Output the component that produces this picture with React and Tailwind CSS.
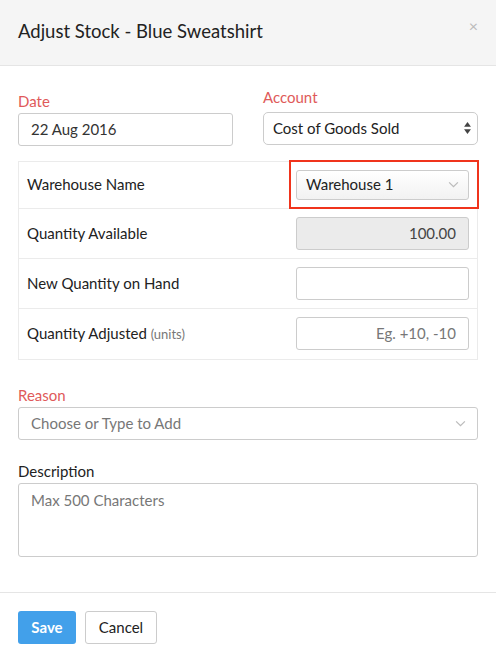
import React from "react";

const Chevron = ({ className }) => (
  <svg viewBox="0 0 12 8" className={className} fill="none" stroke="currentColor" strokeWidth="1.4">
    <path d="M1 1.5l5 5 5-5" />
  </svg>
);

const Row = ({ label, children, last }) => (
  <div className={`flex items-center ${last ? "" : "border-b border-[#ebebeb]"} h-[50px]`}>
    <div className="flex-1 pl-[8px] text-[15px] text-[#222]">{label}</div>
    <div className="w-[189px] px-2 relative">{children}</div>
  </div>
);

export default function App() {
  return (
    <div className="w-[496px] h-[662px] bg-white flex flex-col text-[#333]" style={{ fontFamily: "Lato, 'Open Sans', sans-serif" }}>
      {/* Header */}
      <div className="h-[66px] bg-[#f5f5f5] border-b border-[#e5e5e5] flex items-center justify-between pl-[18px] pr-[18px] shrink-0">
        <h1 className="text-[18.5px] text-[#222] mt-[-2px]">Adjust Stock - Blue Sweatshirt</h1>
        <span className="text-[#bbb] text-[16px] self-start mt-[14px]">×</span>
      </div>

      {/* Body */}
      <div className="flex-1 px-[18px] pt-[20px]">
        <div className="flex gap-[30px]">
          <div className="w-[215px]">
            <label className="block text-[15px] text-[#e05a5a] mt-[4px] mb-0">Date</label>
            <div className="h-[33px] border border-[#ccc] rounded-[3px] flex items-center px-[12px] text-[15px] text-[#333]">22 Aug 2016</div>
          </div>
          <div className="flex-1">
            <label className="block text-[15px] text-[#e05a5a] mb-[3px]">Account</label>
            <div className="h-[33px] border border-[#ccc] rounded-[5px] flex items-center justify-between pl-[9px] pr-[6px] text-[15px] text-[#222] bg-white">
              <span>Cost of Goods Sold</span>
              <svg viewBox="0 0 8 14" className="w-[7px] h-[12px] text-[#444]" fill="currentColor">
                <path d="M4 0L8 5.5H0z" />
                <path d="M4 14L0 8.5h8z" />
              </svg>
            </div>
          </div>
        </div>

        {/* Table */}
        <div className="mt-[15px] border border-[#ebebeb]">
          <div className="flex items-center border-b border-[#ebebeb] h-[47px]">
            <div className="flex-1 pl-[8px] text-[15px] text-[#222]">Warehouse Name</div>
            <div className="w-[189px] px-2 relative">
              <div className="h-[30px] border border-[#ccc] rounded-[3px] bg-gradient-to-b from-white to-[#f2f2f2] flex items-center justify-between pl-[9px] pr-[9px] text-[15px] text-[#222]">
                <span>Warehouse 1</span>
                <Chevron className="w-[11px] h-[7px] text-[#bbb]" />
              </div>
              <div className="absolute left-[1px] right-[-2px] top-[-10px] bottom-[-9px] border-2 border-[#f0341c]"></div>
            </div>
          </div>
          <Row label="Quantity Available">
            <div className="h-[33px] border border-[#ccc] rounded-[3px] bg-[#ebebeb] flex items-center justify-end pr-[12px] text-[15px] text-[#444]">100.00</div>
          </Row>
          <Row label="New Quantity on Hand">
            <div className="h-[33px] border border-[#ccc] rounded-[3px] bg-white"></div>
          </Row>
          <Row
            last
            label={
              <span>
                Quantity Adjusted <span className="text-[13px] text-[#777]">(units)</span>
              </span>
            }
          >
            <div className="h-[33px] border border-[#ccc] rounded-[3px] bg-white flex items-center justify-end pr-[12px] text-[15px] text-[#777]">Eg. +10, -10</div>
          </Row>
        </div>

        {/* Reason */}
        <label className="block text-[15px] text-[#e05a5a] mt-[24px] mb-[1px]">Reason</label>
        <div className="h-[33px] border border-[#ccc] rounded-[3px] flex items-center justify-between pl-[12px] pr-[11px] text-[15px] text-[#777]">
          <span>Choose or Type to Add</span>
          <Chevron className="w-[11px] h-[7px] text-[#bbb]" />
        </div>

        {/* Description */}
        <label className="block text-[15px] text-[#222] mt-[20px] mb-0">Description</label>
        <div className="h-[74px] border border-[#ccc] rounded-[3px] px-[12px] pt-[5px] text-[15px] text-[#777]">Max 500 Characters</div>
      </div>

      {/* Footer */}
      <div className="h-[70px] border-t border-[#e5e5e5] flex items-center gap-[9px] px-[18px] shrink-0">
        <button className="h-[33px] w-[58px] rounded-[3px] bg-[#42a0ea] text-white text-[15px] font-bold">Save</button>
        <button className="h-[33px] w-[72px] rounded-[3px] border border-[#ccc] bg-white text-[15px] text-[#222]">Cancel</button>
      </div>
    </div>
  );
}
